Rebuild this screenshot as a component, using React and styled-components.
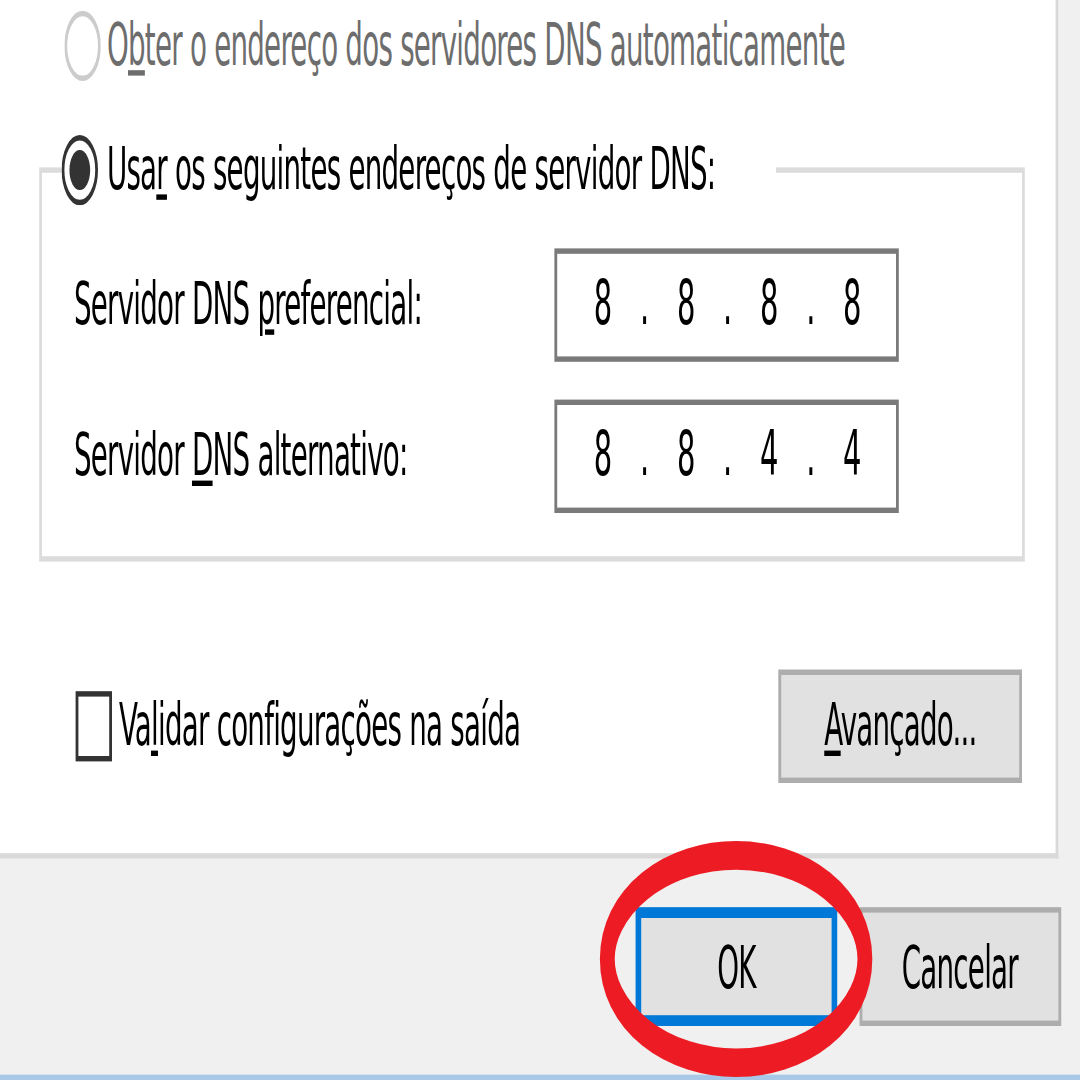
import React from 'react';
import styled, { createGlobalStyle } from 'styled-components';

// the dialog is laid out at its native size, then stretched like the screenshot
const SX = 2.8;
const SY = 5.4;

const GlobalStyle = createGlobalStyle`
  html, body {
    margin: 0;
    padding: 0;
    background: #f0f0f0;
    overflow: hidden;
  }
`;

const Screen = styled.div`
  width: 1080px;
  height: 1080px;
  overflow: hidden;
  background: #f0f0f0;
`;

const Stage = styled.div`
  position: relative;
  width: ${1080 / SX}px;
  height: ${1080 / SY}px;
  transform: scale(${SX}, ${SY});
  transform-origin: 0 0;
  display: flex;
  flex-direction: column;
  font-family: 'DejaVu Sans Condensed', 'Liberation Sans', sans-serif;
  font-size: 11px;
  letter-spacing: -0.27px;
  color: #000;
`;

const TabPage = styled.div`
  box-sizing: border-box;
  width: 377.5px;
  height: 159.3px;
  padding-top: 2.4px;
  background: #fff;
  border-right: 1px solid #d9d9d9;
  border-bottom: 1px solid #d9d9d9;
  display: flex;
  flex-direction: column;
`;

const OptionRow = styled.div`
  display: flex;
  align-items: center;
  gap: 2.7px;
  height: 13px;
  line-height: 13px;
  margin-left: 22.5px;
  white-space: nowrap;
  color: ${(p) => (p.$disabled ? '#6d6d6d' : '#000')};
`;

const Key = styled.u`
  text-decoration-thickness: 1px;
  text-underline-offset: 1.3px;
`;

const GroupBox = styled.fieldset`
  box-sizing: border-box;
  width: 351.4px;
  min-width: 0;
  margin: 10.1px 0 0 14.3px;
  padding: 0;
  border: 1px solid #dcdcdc;
`;

const Legend = styled.legend`
  box-sizing: border-box;
  width: 254.5px;
  height: 13px;
  margin-left: 7.2px;
  padding: 0;
  display: flex;
  align-items: center;
  gap: 2.7px;
  line-height: 13px;
  white-space: nowrap;
`;

const Fields = styled.div`
  display: grid;
  grid-template-columns: 172px 123px;
  align-items: center;
  row-gap: 6.5px;
  padding: 7.8px 0 7.8px 11.1px;
`;

const FieldLabel = styled.span`
  line-height: 13px;
  white-space: nowrap;
`;

const IpBox = styled.div`
  box-sizing: border-box;
  height: 21px;
  padding: 0 5px;
  display: flex;
  align-items: center;
  background: #fff;
  border: 1px solid #7a7a7a;
  font-size: 11.5px;
  letter-spacing: 0;
  line-height: 13px;
`;

const Octet = styled.span`
  width: 22px;
  text-align: center;
`;

const IpDot = styled.span`
  width: 7.7px;
  text-align: center;
`;

const BottomRow = styled.div`
  display: flex;
  align-items: center;
  justify-content: space-between;
  margin: 20px 11.5px 0 26.8px;
`;

const CheckLabel = styled.div`
  display: flex;
  align-items: center;
  gap: 2.7px;
  line-height: 13px;
  white-space: nowrap;
`;

const CheckBox = styled.span`
  box-sizing: border-box;
  width: 13px;
  height: 13.5px;
  background: #fff;
  border: 1px solid #333;
`;

const PushButton = styled.button`
  box-sizing: border-box;
  width: ${(p) => p.$w}px;
  height: 21.7px;
  padding: 0;
  margin: 0;
  font: inherit;
  letter-spacing: inherit;
  color: #000;
  line-height: 13px;
  background: #e1e1e1;
  border: ${(p) => (p.$default ? '2px solid #0078d7' : '1px solid #adadad')};
  border-radius: 0;
`;

const Footer = styled.div`
  flex: 1;
  display: flex;
  justify-content: flex-end;
  align-items: flex-start;
  gap: 8px;
  padding: 9.2px 7.1px 0 0;
`;

const FrameEdge = styled.div`
  height: 1.3px;
  background: #a9c8e8;
`;

const Mark = styled.svg`
  position: absolute;
  left: 0;
  top: 0;
  width: 100%;
  height: 100%;
  pointer-events: none;
  overflow: visible;
`;

function Radio({ checked, disabled }) {
  return (
    <svg width="13" height="13" viewBox="0 0 13 13" style={{ flex: 'none' }}>
      <circle cx="6.5" cy="6.5" r="6" fill="#fff" stroke={disabled ? '#cccccc' : '#333'} strokeWidth="1" />
      {checked && <circle cx="6.5" cy="6.5" r="3.7" fill="#333" />}
    </svg>
  );
}

function IpAddress({ value }) {
  const parts = value.split('.');
  return (
    <IpBox>
      {parts.map((part, i) => (
        <React.Fragment key={i}>
          {i > 0 && <IpDot>.</IpDot>}
          <Octet>{part}</Octet>
        </React.Fragment>
      ))}
    </IpBox>
  );
}

export default function App() {
  return (
    <Screen>
      <GlobalStyle />
      <Stage>
        <TabPage>
          <OptionRow $disabled>
            <Radio disabled />
            <span>
              O<Key>b</Key>ter o endereço dos servidores DNS automaticamente
            </span>
          </OptionRow>

          <GroupBox>
            <Legend>
              <Radio checked />
              <span>
                Usa<Key>r</Key> os seguintes endereços de servidor DNS:
              </span>
            </Legend>
            <Fields>
              <FieldLabel>
                Servidor DNS <Key>p</Key>referencial:
              </FieldLabel>
              <IpAddress value="8.8.8.8" />
              <FieldLabel>
                Servidor <Key>D</Key>NS alternativo:
              </FieldLabel>
              <IpAddress value="8.8.4.4" />
            </Fields>
          </GroupBox>

          <BottomRow>
            <CheckLabel>
              <CheckBox />
              <span>
                Va<Key>l</Key>idar configurações na saída
              </span>
            </CheckLabel>
            <PushButton $w={86.8}>
              <Key>A</Key>vançado...
            </PushButton>
          </BottomRow>
        </TabPage>

        <Footer>
          <PushButton $w={72} $default>OK</PushButton>
          <PushButton $w={71.6}>Cancelar</PushButton>
        </Footer>
        <FrameEdge />

        <Mark viewBox={`0 0 ${1080 / SX} ${1080 / SY}`} preserveAspectRatio="none">
          <ellipse cx="262.9" cy="177.6" rx="46" ry="19.2" fill="none" stroke="#ed1c24" strokeWidth="5.3" />
        </Mark>
      </Stage>
    </Screen>
  );
}
